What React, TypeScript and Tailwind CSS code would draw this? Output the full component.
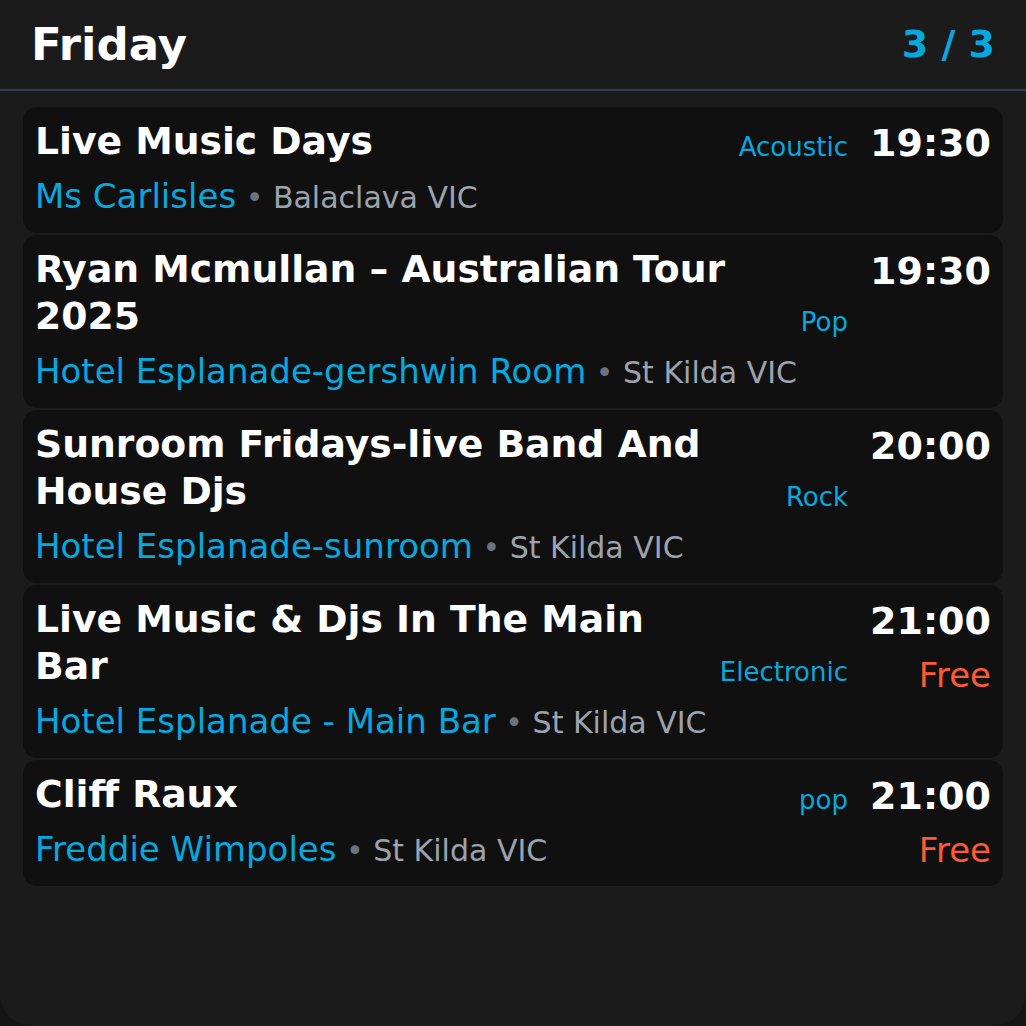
import React from 'react'

type Gig = {
    title: string
    venue: string
    suburb: string
    genre: string
    time: string
    free?: boolean
}

const gigs: Gig[] = [
    { title: "Live Music Days", venue: "Ms Carlisles", suburb: "Balaclava VIC", genre: "Acoustic", time: "19:30" },
    { title: "Ryan Mcmullan – Australian Tour 2025", venue: "Hotel Esplanade-gershwin Room", suburb: "St Kilda VIC", genre: "Pop", time: "19:30" },
    { title: "Sunroom Fridays-live Band And House Djs", venue: "Hotel Esplanade-sunroom", suburb: "St Kilda VIC", genre: "Rock", time: "20:00" },
    { title: "Live Music & Djs In The Main Bar", venue: "Hotel Esplanade - Main Bar", suburb: "St Kilda VIC", genre: "Electronic", time: "21:00", free: true },
    { title: "Cliff Raux", venue: "Freddie Wimpoles", suburb: "St Kilda VIC", genre: "pop", time: "21:00", free: true },
]

function GigCard({ gig }: { gig: Gig }) {
    return (
        <div className="flex bg-[#101010] rounded-[14px] px-3 pt-[11px] pb-[13px]">
            <div className="flex-1 min-w-0">
                <div className="flex items-end justify-between gap-4">
                    <div className="text-[37.7px] leading-[47px] font-bold text-white">{gig.title}</div>
                    <div className="text-[26px] leading-[36px] text-[#06a8df] whitespace-nowrap">{gig.genre}</div>
                </div>
                <div className="mt-[7px] h-[48px] text-[34px] leading-[48px] whitespace-nowrap">
                    <span className="text-[#06a8df]">{gig.venue}</span>
                    <span className="text-[30px] leading-[30px] text-[#6b7280]"> • </span>
                    <span className="text-[30px] leading-[30px] text-[#9ca3af]">{gig.suburb}</span>
                </div>
            </div>
            <div className="ml-[22px] mt-[2px] flex flex-col items-end">
                <div className="text-[38px] leading-[47px] font-bold text-white">{gig.time}</div>
                {gig.free &&
                    <div className="mt-[10px] text-[34px] leading-[40px] text-[#ff5a36]">Free</div>
                }
            </div>
        </div>
    )
}

export default function App() {
    return (
        <div className="w-full h-screen bg-[#151515] font-['DejaVu_Sans',sans-serif]">
            <div className="h-full rounded-b-[32px] bg-[#1b1b1b] overflow-hidden">
                <div className="flex items-center justify-between h-[91px] px-[31px] border-b-2 border-[#363b45]">
                    <div className="text-[45px] font-bold text-white">Friday</div>
                    <div className="text-[38px] font-bold text-[#06a8df]">3 / 3</div>
                </div>
                <div className="flex flex-col gap-[2px] px-[23px] pt-4">
                    {gigs.map((gig, i) => <GigCard key={i} gig={gig} />)}
                </div>
            </div>
        </div>
    )
}
